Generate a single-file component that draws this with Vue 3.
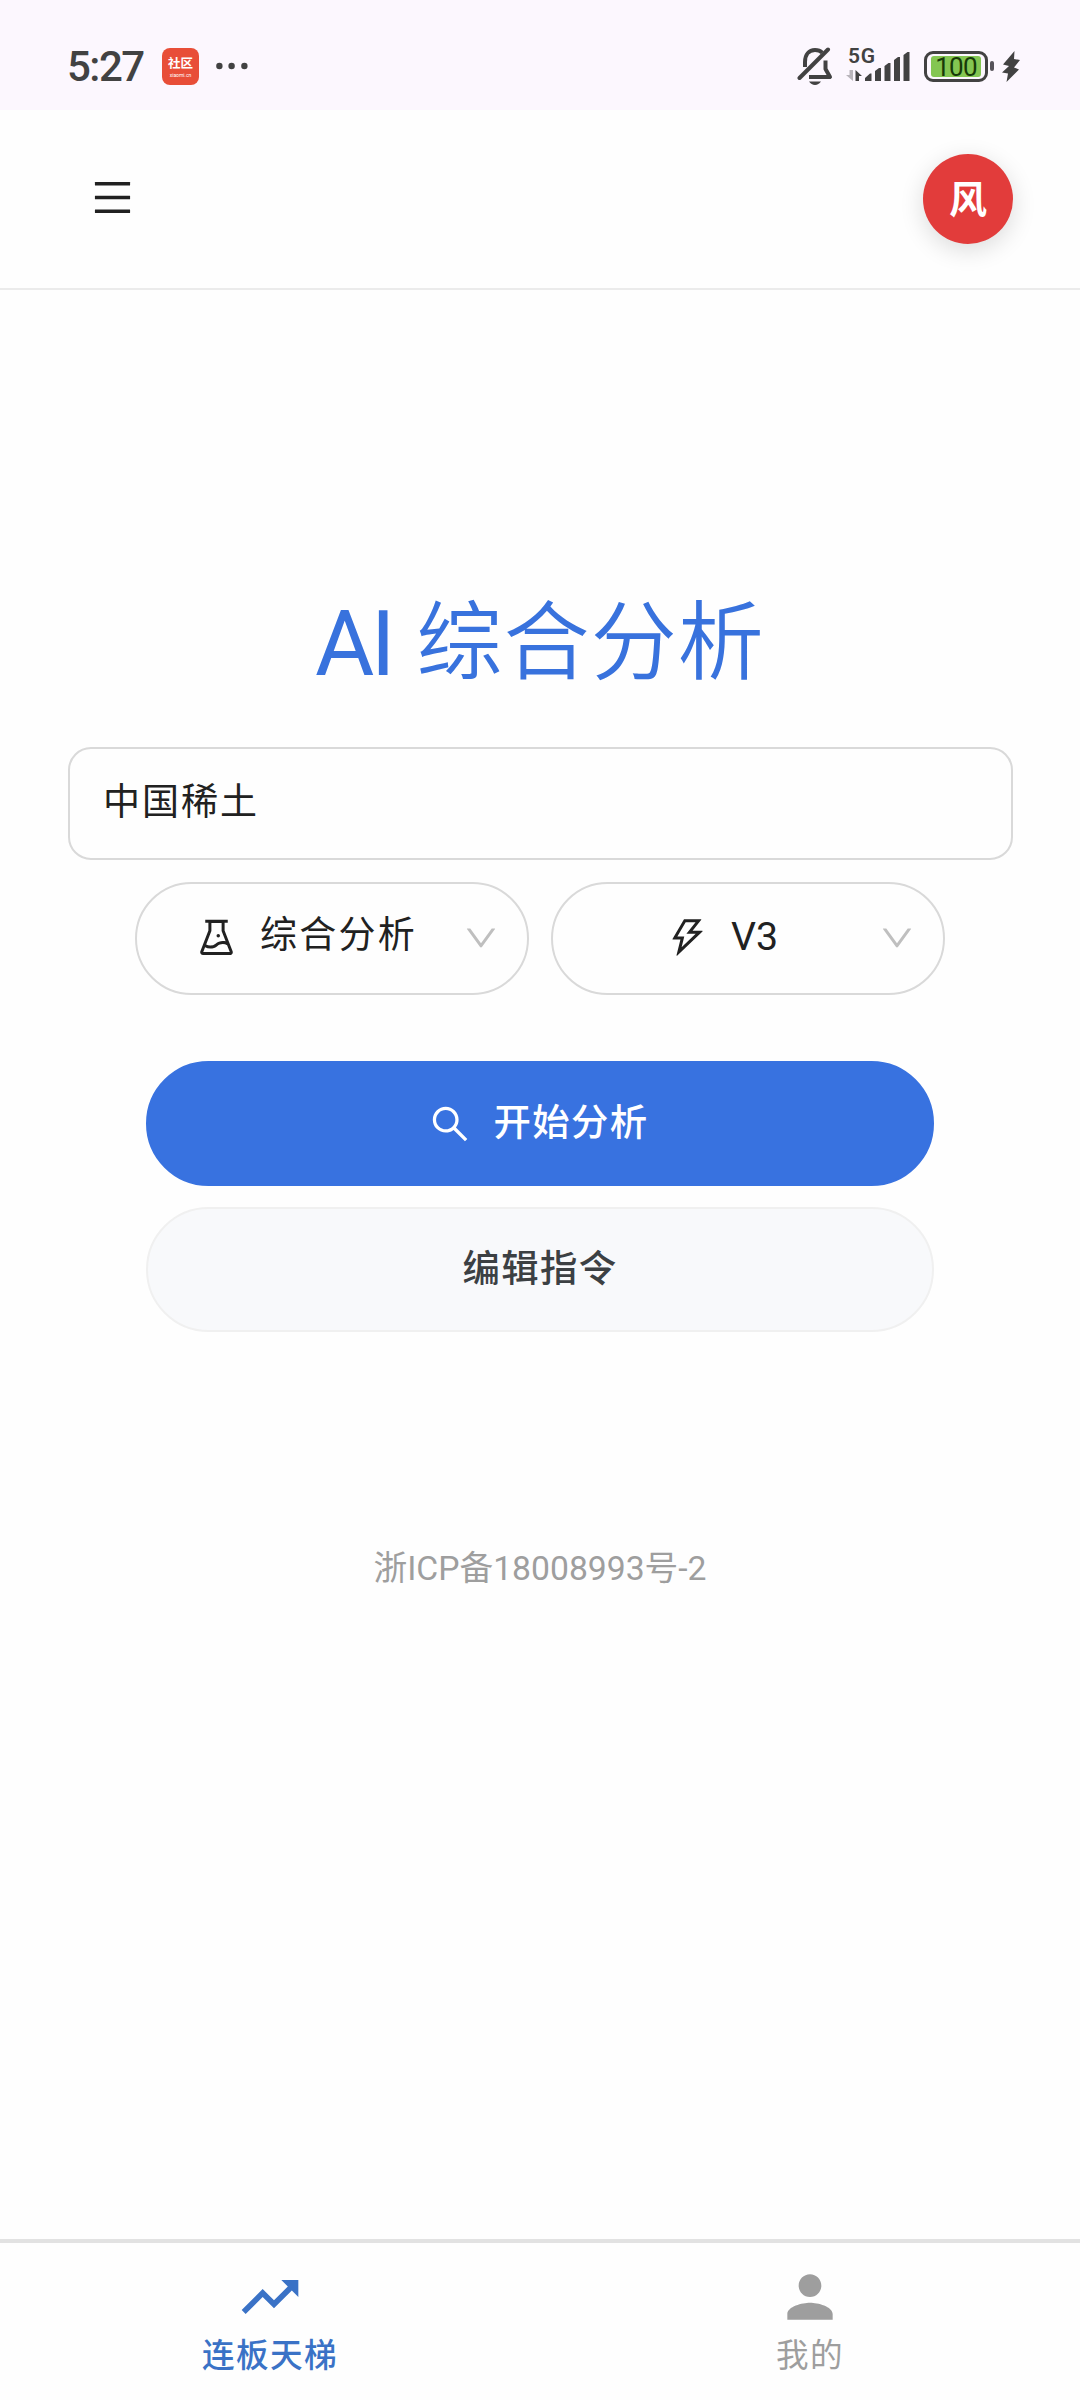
<script setup>
import { ref } from 'vue'

const keyword = ref('中国稀土')
const activeTab = ref('ladder')

// 1024-unit outlined icons
const icons = {
  experiment:
    'M512 472a40 40 0 1080 0 40 40 0 10-80 0zm367 352.9L696.3 352V178H768v-68H256v68h71.7v174L145 824.9c-2.8 7.4-4.3 15.2-4.3 23.1 0 35.3 28.7 64 64 64h614.6c7.9 0 15.7-1.5 23.1-4.3 33-12.7 49.4-49.8 36.6-82.8zM395.7 364.7V180h232.6v184.7L719.2 600c-20.7-5.3-42.1-8-63.9-8-61.2 0-119.2 21.5-165.3 60a188.78 188.78 0 01-121.3 43.9c-32.7 0-64.1-8.3-91.8-23.7l118.8-307.5zM210.5 844l41.7-107.8c35.7 18.1 75.4 27.8 116.6 27.8 61.2 0 119.2-21.5 165.3-60 33.9-28.2 76.3-43.9 121.3-43.9 35 0 68.4 9.5 97.6 27.1L813.5 844h-603z',
  thunderbolt:
    'M848 359.3H627.7L825.8 109c4.1-5.3.4-13-6.3-13H436c-2.8 0-5.5 1.5-6.9 4L170 547.5c-3.1 5.3.7 12 6.9 12h174.4l-89.4 357.6c-1.9 7.8 7.5 13.3 13.3 7.7L853.5 373c5.2-4.9 1.7-13.7-5.5-13.7zM378.2 732.5l60.3-241H281.1l189.6-327.4h224.6L487 427.4h211L378.2 732.5z',
  search:
    'M909.6 854.5L649.9 594.8C690.2 542.7 712 479 712 412c0-80.2-31.3-155.4-87.9-212.1-56.6-56.7-132-87.9-212.1-87.9s-155.5 31.3-212.1 87.9C143.2 256.5 112 331.8 112 412c0 80.1 31.3 155.5 87.9 212.1C256.5 680.8 331.8 712 412 712c67 0 130.6-21.8 182.7-62l259.7 259.6a8.2 8.2 0 0011.6 0l43.6-43.5a8.2 8.2 0 000-11.6zM570.4 570.4C528 612.7 471.8 636 412 636s-116-23.3-158.4-65.6C211.3 528 188 471.8 188 412s23.3-116.1 65.6-158.4C296 211.3 352.2 188 412 188s116.1 23.2 158.4 65.6S636 352.2 636 412s-23.3 116.1-65.6 158.4z',
  down:
    'M884 256h-75c-5.1 0-9.9 2.5-12.9 6.6L512 654.2 227.9 262.6c-3-4.1-7.8-6.6-12.9-6.6h-75c-6.5 0-10.3 7.4-6.5 12.7l352.6 486.1c12.8 17.6 39 17.6 51.7 0l352.6-486.1c3.9-5.3.1-12.7-6.4-12.7z'
}

const selects = [
  { id: 'mode', icon: icons.experiment, label: '综合分析' },
  { id: 'model', icon: icons.thunderbolt, label: 'V3' }
]

const tabs = [
  {
    id: 'ladder',
    label: '连板天梯',
    icon: 'M16 6l2.29 2.29-4.88 4.88-4-4L2 16.59 3.41 18l6-6 4 4 6.3-6.29L22 12V6z'
  },
  {
    id: 'mine',
    label: '我的',
    icon: 'M12 12c2.21 0 4-1.79 4-4s-1.79-4-4-4-4 1.79-4 4 1.79 4 4 4zm0 2c-2.67 0-8 1.34-8 4v2h16v-2c0-2.66-5.33-4-8-4z'
  }
]
</script>

<template>
  <div class="screen">
    <div class="status-bar">
      <span class="clock">5:27</span>
      <div class="app-badge">
        <span class="app-name">社区</span>
        <span class="app-domain">xiaomi.cn</span>
      </div>
      <svg class="more" width="32" height="8" viewBox="0 0 32 8">
        <circle cx="3.4" cy="4" r="3.2" />
        <circle cx="15.6" cy="4" r="3.2" />
        <circle cx="28.4" cy="4" r="3.2" />
      </svg>
      <div class="status-icons">
        <svg width="36" height="38" viewBox="0 0 36 38">
          <path d="M8 20V15C8 7.5 12 3 18 3c3 0 5.500 1 7.200 2.700M28.500 13.500V22l4.500 8H12" fill="none" stroke="#424242" stroke-width="4" stroke-linejoin="round" />
          <path d="M2.500 31L31 2.500" stroke="#424242" stroke-width="4" stroke-linecap="round" />
          <path d="M12 34.500h12c-1.500 2.300-3.600 3.500-6 3.500s-4.500-1.200-6-3.500z" fill="#424242" />
        </svg>
        <div class="signal">
          <span class="network">5G</span>
          <svg width="64" height="32" viewBox="0 0 64 32">
            <path d="M3.500 20h3.500v11L0 25h3.500z" fill="#b9b5bb" />
            <path d="M9.500 31V20l6.500 6h-3v5z" />
            <path d="M19 31v-3l5-4.500h1.500V31zM29 31V21l4-3h2v13zM38.500 31V16l4-3h2v18zM48 31V10l4-3h2v24zM57.500 31V5l4-3h2v29z" />
          </svg>
        </div>
        <div class="battery">
          <div class="battery-level">100</div>
        </div>
        <div class="battery-tip"></div>
        <svg class="charge" width="18" height="31" viewBox="0 0 18 31">
          <path d="M12.500 0L1 13.500l6 1.500-7 6.500 6 1L4.500 31 17 18.500l-5-2 6-7.500-6-1z" />
        </svg>
      </div>
    </div>

    <header class="header">
      <button class="menu-btn" title="菜单">
        <svg width="45" height="45" viewBox="0 0 1024 1024">
          <rect x="112" y="160" width="800" height="80" rx="8" />
          <rect x="112" y="472" width="800" height="80" rx="8" />
          <rect x="112" y="784" width="800" height="80" rx="8" />
        </svg>
      </button>
      <div class="avatar">风</div>
    </header>

    <main class="content">
      <h1><span class="latin">AI</span> 综合分析</h1>

      <input v-model="keyword" class="keyword" type="text" />

      <div class="selects">
        <div v-for="item in selects" :key="item.id" class="select" :class="item.id">
          <div class="select-value">
            <svg width="45" height="45" viewBox="0 0 1024 1024"><path :d="item.icon" /></svg>
            <span>{{ item.label }}</span>
          </div>
          <svg class="arrow" width="38" height="38" viewBox="0 0 1024 1024"><path :d="icons.down" /></svg>
        </div>
      </div>

      <div class="actions">
        <button class="btn primary">
          <svg width="44" height="44" viewBox="0 0 1024 1024"><path :d="icons.search" /></svg>
          <span>开始分析</span>
        </button>
        <button class="btn"><span>编辑指令</span></button>
      </div>

      <footer class="record">浙ICP备18008993号-2</footer>
    </main>

    <nav class="tab-bar">
      <button
        v-for="tab in tabs"
        :key="tab.id"
        class="tab"
        :class="{ active: tab.id === activeTab }"
        @click="activeTab = tab.id"
      >
        <svg width="68" height="68" viewBox="0 0 24 24"><path :d="tab.icon" /></svg>
        <span>{{ tab.label }}</span>
      </button>
    </nav>
  </div>
</template>

<style>
body {
  background: #fefefe;
}
</style>

<style scoped>
.screen {
  width: 1080px;
  height: 2400px;
  display: flex;
  flex-direction: column;
  overflow: hidden;
  background: #fefefe;
  color: #212121;
  font-family: Roboto, "Noto Sans CJK SC", sans-serif;
}

svg {
  display: block;
  flex: none;
  fill: currentColor;
}

button {
  border: none;
  padding: 0;
  background: transparent;
  color: inherit;
  font-family: inherit;
  cursor: pointer;
}

.status-bar {
  height: 110px;
  box-sizing: border-box;
  padding: 22px 60px 0 67px;
  display: flex;
  align-items: center;
  background: #fcf7fe;
  color: #424242;
}

.clock {
  width: 95px;
  font-size: 42px;
  font-weight: 500;
  letter-spacing: -1.5px;
  white-space: nowrap;
}

.app-badge {
  width: 37px;
  height: 37px;
  display: flex;
  flex-direction: column;
  align-items: center;
  border-radius: 8px;
  background: #e84e38;
  color: #fff;
}

.app-name {
  margin-top: 8px;
  font-size: 12.5px;
  font-weight: 700;
  line-height: 16px;
}

.app-domain {
  font-size: 5px;
  line-height: 6px;
}

.more {
  margin-left: 17px;
}

.status-icons {
  margin-left: auto;
  display: flex;
  align-items: center;
}

.signal {
  position: relative;
  margin-left: 13px;
}

.network {
  position: absolute;
  left: 2px;
  top: -6px;
  font-size: 21px;
  font-weight: 600;
  line-height: 24px;
  letter-spacing: 0.7px;
}

.battery {
  width: 64px;
  height: 31px;
  box-sizing: border-box;
  margin-left: 14px;
  padding: 2px 4px;
  border: 3px solid #424242;
  border-radius: 9px;
}

.battery-level {
  height: 21px;
  border-radius: 3px;
  background: #84c652;
  color: #173a08;
  font-size: 26px;
  font-weight: 400;
  line-height: 22px;
  letter-spacing: -0.8px;
  text-align: center;
}

.battery-tip {
  width: 4px;
  height: 10px;
  margin-left: 2px;
  border-radius: 2px;
  background: #56535a;
}

.charge {
  margin-left: 8px;
}

.header {
  height: 180px;
  box-sizing: border-box;
  padding: 0 67px 0 90px;
  display: flex;
  align-items: center;
  justify-content: space-between;
  border-bottom: 2px solid #ebebeb;
}

.menu-btn {
  margin-bottom: 3px;
}

.avatar {
  width: 90px;
  height: 90px;
  border-radius: 50%;
  background: #e23c3b;
  box-shadow: 0 6px 24px rgba(0, 0, 0, 0.14);
  color: #fff;
  font-size: 38px;
  font-weight: 700;
  line-height: 92px;
  text-align: center;
}

.content {
  flex: 1;
  display: flex;
  flex-direction: column;
  align-items: center;
  padding: 290px 67px 0;
}

h1 {
  height: 126px;
  margin: 0;
  color: #3872dd;
  font-size: 86px;
  font-weight: 350;
  line-height: 125px;
  letter-spacing: 1.2px;
  word-spacing: 2px;
  white-space: nowrap;
}

.latin {
  position: relative;
  top: 2px;
  font-size: 91px;
  font-weight: 400;
  letter-spacing: -3.5px;
}

.keyword {
  width: 945px;
  height: 113px;
  box-sizing: border-box;
  margin: 41px 0 0 1px;
  padding: 0 33px 10px;
  border: 2px solid #d9d9d9;
  border-radius: 23px;
  outline: none;
  background: transparent;
  color: #212121;
  font-family: inherit;
  font-size: 37px;
  letter-spacing: 2px;
}

.selects {
  display: flex;
  gap: 22px;
  margin-top: 22px;
}

.select {
  width: 394px;
  height: 113px;
  box-sizing: border-box;
  padding: 0 27px 2px 12px;
  display: flex;
  align-items: center;
  border: 2px solid #d9d9d9;
  border-radius: 57px;
}

.select-value {
  flex: 1;
  display: flex;
  align-items: center;
  justify-content: center;
  gap: 21px;
  font-size: 37px;
  letter-spacing: 2.2px;
}

.select-value span {
  line-height: 56px;
  padding-bottom: 3px;
}

.model .select-value {
  font-size: 39.3px;
  letter-spacing: 0;
}

.model .select-value span {
  padding-bottom: 1px;
}

.arrow {
  color: #bfbfbf;
}

.actions {
  width: 788px;
  display: flex;
  flex-direction: column;
  gap: 21px;
  margin-top: 66px;
}

.btn {
  height: 125px;
  display: flex;
  align-items: center;
  justify-content: center;
  gap: 22px;
  border: 2px solid #f0f0f0;
  border-radius: 63px;
  background: #f8f9fb;
  color: #3c4043;
  font-size: 37.4px;
  font-weight: 500;
  letter-spacing: 1.3px;
}

.btn span {
  line-height: 56px;
  padding-bottom: 2px;
}

.btn.primary {
  padding-right: 4px;
  border-color: #3872e0;
  background: #3872e0;
  color: #fff;
}

.record {
  margin-top: 212px;
  color: #9e9e9e;
  font-size: 33.7px;
  line-height: 50px;
}

.tab-bar {
  height: 161px;
  box-sizing: border-box;
  display: grid;
  grid-template-columns: 1fr 1fr;
  border-top: 4px solid #e2e2e2;
}

.tab {
  display: flex;
  flex-direction: column;
  align-items: center;
  padding-top: 20px;
  color: #9e9e9e;
  font-size: 32.6px;
  letter-spacing: 1.4px;
  line-height: 51px;
}

.tab.active {
  color: #3a72c6;
  font-weight: 500;
}
</style>
